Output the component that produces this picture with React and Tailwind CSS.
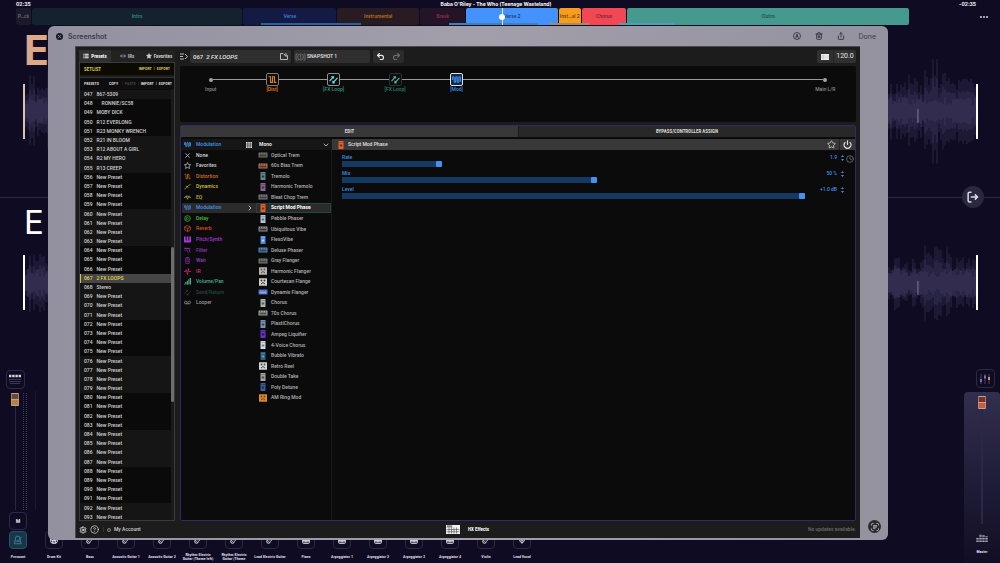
import React from "react";
import {
  List, Star, Undo2, Redo2, Power, Settings, CircleQuestionMark, Trash2, Share,
  X, ChevronRight, ChevronDown, Clock4, Guitar, Piano, Drum, Mic,
} from "lucide-react";

const segments = [
  { name: "P...ck", grow: 15, cls: "bg-[#1b1a2b] text-[#6d6c7e]" },
  { name: "Intro", grow: 212, cls: "bg-[#14212f] text-[#2f8f7c]" },
  { name: "Verse", grow: 94, cls: "bg-[#131b45] text-[#3a7fd8]" },
  { name: "Instrumental", grow: 82, cls: "bg-[#291b22] text-[#b86f20]" },
  { name: "Break", grow: 46, cls: "bg-[#241428] text-[#8c2f4c]" },
  { name: "Verse 2", grow: 92, cls: "bg-[#4492fb] text-[#1f4374]" },
  { name: "Inst...al 2", grow: 22, cls: "bg-[#f79c1b] text-[#754a0d]" },
  { name: "Chorus", grow: 45, cls: "bg-[#f24755] text-[#762730]" },
  { name: "Outro", grow: 284, cls: "bg-[#46998d] text-[#215149]" },
];

// [gap, length] pairs of the marker strip under the sections
const marks = [
  [245, 100, "bg-[#2a6298]"], [88, 88, "bg-[#4080b8]"], [12, 39, "bg-[#a08c68]"],
  [28, 0, "bg-transparent"], [2, 55, "bg-[#4c9fb8]"], [235, 0, "bg-transparent"],
];

const presetNames = {
  47: "867-5309", 48: "    RONNIE/SC58", 49: "MOBY DICK", 50: "R12 EVERLONG",
  51: "R23 MONKY WRENCH", 52: "R21 IN BLOOM", 53: "R12 ABOUT A GIRL", 54: "R2 MY HERO",
  55: "R13 CREEP", 67: "2 FX LOOPS", 68: "Stereo",
};
const presets = Array.from({ length: 47 }, (_, i) => {
  const n = 47 + i;
  return { n, id: String(n).padStart(3, "0"), name: presetNames[n] || "New Preset" };
});

const categories = [
  { name: "None", icon: "none", cls: "text-[#dcdcdc]" },
  { name: "Favorites", icon: "star", cls: "text-[#d0d0d0]" },
  { name: "Distortion", icon: "dist", cls: "text-[#d2721e]" },
  { name: "Dynamics", icon: "dyn", cls: "text-[#d0c224]" },
  { name: "EQ", icon: "eq", cls: "text-[#c0b626]" },
  { name: "Modulation", icon: "mod", cls: "text-[#3f92ea]", active: true },
  { name: "Delay", icon: "delay", cls: "text-[#39c42d]" },
  { name: "Reverb", icon: "reverb", cls: "text-[#d84c22]" },
  { name: "Pitch/Synth", icon: "pitch", cls: "text-[#a836d4]" },
  { name: "Filter", icon: "filter", cls: "text-[#9136c0]" },
  { name: "Wah", icon: "wah", cls: "text-[#9636c4]" },
  { name: "IR", icon: "ir", cls: "text-[#d02e7a]" },
  { name: "Volume/Pan", icon: "vol", cls: "text-[#46ab92]" },
  { name: "Send/Return", icon: "send", cls: "text-[#24493f]" },
  { name: "Looper", icon: "loop", cls: "text-[#989898]" },
];

const models = [
  ["Optical Trem", "wide", "#77776a", "#3a3a36"], ["60s Bias Trem", "wide", "#b0765a", "#5d3526"],
  ["Tremolo", "tall", "#5f8b8c", "#20383a"], ["Harmonic Tremolo", "tall", "#8a6590", "#432b49"],
  ["Bleat Chop Trem", "wide", "#777b80", "#3b3f44"], ["Script Mod Phase", "tall", "#e8602c", "#7d2d12"],
  ["Pebble Phaser", "tall", "#b9c2c9", "#3f6f9d"], ["Ubiquitous Vibe", "wide", "#8e8e8e", "#333333"],
  ["FlexoVibe", "tall", "#4a8ae0", "#c2d4ee"], ["Deluxe Phaser", "wide", "#5d83b3", "#2c4668"],
  ["Gray Flanger", "wide", "#77797c", "#424446"], ["Harmonic Flanger", "square", "#b6b6b6", "#6d4d4d"],
  ["Courtesan Flange", "square", "#d0cec8", "#36342f"], ["Dynamix Flanger", "wide", "#4668c4", "#8fa5df"],
  ["Chorus", "tall", "#b2b6a6", "#47557b"], ["70s Chorus", "wide", "#9da39b", "#4b504a"],
  ["PlastiChorus", "tall", "#7893ba", "#39465a"], ["Ampeg Liquifier", "tall", "#6a32c4", "#2b1463"],
  ["4-Voice Chorus", "tall", "#d4dade", "#6c8494"], ["Bubble Vibrato", "tall", "#2b5f80", "#5aa2c4"],
  ["Retro Reel", "square", "#d4d4d4", "#4b4b4b"], ["Double Take", "tall", "#a6a6a0", "#4c4c48"],
  ["Poly Detune", "tall", "#3d5d99", "#1c2b49"], ["AM Ring Mod", "square", "#dd8a26", "#71400c"],
];

const params = [
  { name: "Rate", value: "1.9", pct: 19 },
  { name: "Mix", value: "50 %", pct: 50 },
  { name: "Level", value: "+1.0 dB", pct: 92 },
];

const channels = [
  [["Drum Kit"], Drum], [["Bass"], Guitar], [["Acoustic Guitar 1"], Guitar], [["Acoustic Guitar 2"], Guitar],
  [["Rhythm Electric", "Guitar (Theme left)"], Guitar], [["Rhythm Electric", "Guitar (Theme"], Guitar],
  [["Lead Electric Guitar"], Guitar], [["Piano"], Piano], [["Arpeggiator 1"], Piano], [["Arpeggiator 2"], Piano],
  [["Arpeggiator 3"], Piano], [["Arpeggiator 4"], Piano], [["Violin"], Guitar], [["Lead Vocal"], Mic],
];

const glyphs = {
  none: <path d="M3 3l10 10M13 3L3 13" />,
  star: <path d="M8 1l2.2 4.7 5 .6-3.7 3.5 1 5L8 12.300l-4.500 2.500 1-5L.8 6.300l5-.6z" />,
  dist: <path d="M1 3h3.500v10H8V3h3.500v10H15" />,
  dyn: <path d="M1 14l5-4 4-4 5-3M4 7l6 3" />,
  eq: <path d="M0 8h3l2-3 3 7 3-7 2 3h3M3 5h10" />,
  mod: <path d="M1 9V4.500c0-2 2.800-2 2.800 0v7c0 2 2.800 2 2.800 0v-7c0-2 2.800-2 2.800 0v7c0 2 2.800 2 2.800 0v-7c0-2 2.800-2 2.800 0V12" />,
  delay: <><circle cx="8" cy="8" r="6.500" /><path d="M5 4v8M8 5l3 3-3 3" /></>,
  reverb: <><path d="M8 1l6.500 3.500v7L8 15l-6.500-3.500v-7z" /><path d="M1.500 4.500L8 8l6.500-3.500M8 8v7" /></>,
  pitch: <path fill="currentColor" stroke="none" d="M0 1h4v14H0zM6 1h4v14H6zM12 1h4v14h-4zM4 10h8v5H4z" />,
  filter: <path d="M1 3h9c3 0 2 10 5 10M1 7h5c3 0 2 6 4 6M1 3l14 1" />,
  wah: <><rect x="4" y="1" width="8" height="14" rx="1.500" /><path d="M6 4h4M6 7h4M6 10h4" /></>,
  ir: <path d="M0 8h4l1-4 3 11 2-14 1 7h5" />,
  vol: <path fill="currentColor" stroke="none" d="M0 15h2v-2H0zM3 15h2.500V9H3zM6.500 15H9V6H6.500zM10 15h2V3h-2zM13 15h3V0h-3z" />,
  send: <path d="M1 11l7-8M7 14l8-9M4 3h4v3M7 10v4h3" />,
  loop: <><circle cx="4" cy="8" r="3" /><circle cx="12" cy="8" r="3" /><path d="M4 11h8" /></>,
};

function Glyph({ name, className = "size-1.5", w = 1.6 }) {
  return (
    <svg viewBox="0 0 16 16" className={`${className} shrink-0`} fill="none" stroke="currentColor" strokeWidth={w} aria-hidden="true">
      {glyphs[name]}
    </svg>
  );
}

function Pedal({ shape, color, dark }) {
  return (
    <svg viewBox="0 0 20 16" className="h-2 w-2.5 shrink-0" aria-hidden="true">
      {shape === "wide" && (
        <g>
          <rect x="1" y="3" width="18" height="10" rx="1" fill={color} />
          <rect x="3" y="7" width="14" height="4" fill={dark} />
          <path d="M4 5h2M9 5h2M14 5h2" stroke={dark} strokeWidth="1.500" />
        </g>
      )}
      {shape === "tall" && (
        <g>
          <rect x="5" y="0" width="10" height="16" rx="1" fill={color} />
          <rect x="7.500" y="7" width="5" height="4" fill={dark} />
          <path d="M7 3h2M11 3h2" stroke={dark} strokeWidth="1.800" />
        </g>
      )}
      {shape === "square" && (
        <g>
          <rect x="2" y="0.500" width="16" height="15" rx="1" fill={color} />
          <circle cx="7" cy="5" r="1.800" fill={dark} />
          <circle cx="13" cy="5" r="1.800" fill={dark} />
          <path d="M6 12l4-3 4 3" stroke={dark} strokeWidth="2" fill="none" />
        </g>
      )}
    </svg>
  );
}

// Loudness along the track: [from x, amplitude]
const envelope = [[0, 36], [30, 26], [862, 34], [898, 52], [912, 44], [926, 34], [936, 36]];

function wavePath(seed, scale) {
  let s = seed;
  const rnd = () => ((s = (s * 16807) % 2147483647) / 2147483647);
  let soft = "";
  let mid = "";
  let core = "";
  for (let x = 1; x < 950; x += 2) {
    const level = envelope.filter(([from]) => x >= from).pop()[1] * scale;
    const a = level * (0.45 + rnd() * 0.6);
    const up = a * (0.9 + rnd() * 0.2);
    soft += `M${x} ${60 - up}V${60 + a}`;
    mid += `M${x} ${60 - a * 0.62}V${60 + a * 0.6}`;
    const c = 6 + rnd() * 8;
    core += `M${x} ${60 - c}V${60 + c}`;
  }
  return { soft, mid, core };
}
const waves = [wavePath(421, 1), wavePath(977, 0.78)];

function Lane({ letter, letterClass, laneClass, barClass, wave }) {
  return (
    <section className={`relative flex min-h-0 flex-1 items-center pr-[22px] pl-[23px] ${laneClass}`}>
      <span className={`absolute left-6 leading-none ${letterClass}`}>{letter}</span>
      <div className={`h-[55px] w-0.5 ${barClass}`} />
      <svg viewBox="0 0 950 120" preserveAspectRatio="none" className="h-[120px] min-w-0 flex-1" aria-hidden="true">
        <path d={wave.soft} stroke="#2c2848" strokeOpacity="0.5" strokeWidth="2" />
        <path d={wave.mid} stroke="#312d4e" strokeOpacity="0.6" strokeWidth="2" />
        <path d={wave.core} stroke="#3a3558" strokeOpacity="0.55" strokeWidth="2" />
        <path d="M892 58v14" stroke="#6d6988" strokeWidth="1.300" />
      </svg>
      <div className="h-[55px] w-0.5 bg-white" />
    </section>
  );
}

function Timeline() {
  return (
    <header className="flex h-[26px] shrink-0 flex-col">
      <div className="grid h-2 grid-cols-3 items-center px-4 pr-6 text-[5px] leading-none font-bold text-white">
        <span>02:35</span>
        <h1 className="text-center whitespace-nowrap">Baba O'Riley - The Who (Teenage Wasteland)</h1>
        <span className="text-right">-02:35</span>
      </div>
      <div className="flex h-[17px] items-center">
        <div className="relative ml-4 flex h-full min-w-0 flex-1 gap-px">
          {segments.map((s) => (
            <button key={s.name} style={{ flexGrow: s.grow }} className={`min-w-0 basis-0 overflow-hidden rounded-xs text-center font-['Lato',sans-serif] text-[5px] leading-none font-bold whitespace-nowrap ${s.cls}`}>
              {s.name}
            </button>
          ))}
          <div className="absolute inset-x-0 bottom-0 flex h-0.5">
            {marks.map(([gap, len, cls], i) => (
              <React.Fragment key={i}>
                <div className="basis-0" style={{ flexGrow: gap }} />
                <div className={`basis-0 ${cls}`} style={{ flexGrow: len }} />
              </React.Fragment>
            ))}
          </div>
          <div className="absolute inset-y-0 left-[54.4%] flex w-px items-center justify-center bg-white/80">
            <div className="size-1.5 shrink-0 rounded-full bg-white" />
          </div>
        </div>
        <button aria-label="More" className="flex w-[91px] items-center justify-end gap-px pr-3">
          <i className="size-0.5 rounded-full bg-[#d6d6de]" />
          <i className="size-0.5 rounded-full bg-[#d6d6de]" />
          <i className="size-0.5 rounded-full bg-[#d6d6de]" />
        </button>
      </div>
    </header>
  );
}

function Knob({ top, bottom }) {
  return (
    <svg viewBox="0 0 8 13" className="h-[13px] w-2" aria-hidden="true">
      <rect width="8" height="13" rx="1" fill="#b9a99c" />
      <rect x="0.600" y="1" width="6.800" height="5" fill={top} />
      <rect x="0.600" y="7" width="6.800" height="5" fill={bottom} />
    </svg>
  );
}

const narrow = "font-['Roboto_Condensed','Liberation_Sans_Narrow','Roboto',sans-serif]";

function Mixer() {
  return (
    <section className={`flex h-[195px] shrink-0 justify-between text-[4px] leading-none font-bold text-[#dcdce4] ${narrow}`}>
      <div className="flex">
        <div className="flex w-9 flex-col items-center pt-0.5">
          <button aria-label="Keyboard" className="mr-1.5 flex size-[19px] items-center justify-center rounded-sm border border-[#2c2947]">
            <svg viewBox="0 0 12 11" className="h-[11px] w-3" aria-hidden="true">
              <path d="M0 2h2.400M3.200 2h2.400M6.400 2h2.400M9.600 2H12" stroke="#d8d8e0" strokeWidth="2.600" />
              <path d="M0 5.500h12M0 7.500h12M1 9.500h10" stroke="#3a3658" />
            </svg>
          </button>
          <div className="mt-0.5 flex min-h-0 w-full flex-1 gap-1 border-r border-[#1c1936] pl-[11px]">
            <div className="flex flex-col items-center pt-0.5">
              <Knob top="#6d4a2a" bottom="#b8803f" />
              <div className="w-px flex-1 bg-[#2a2744]" />
            </div>
            <div className="mt-0.5 w-1 border-x border-dotted border-[#3b3858]" />
          </div>
          <button className="mt-0.5 flex size-[18px] items-center justify-center rounded-sm border border-[#2c2947] text-[6px]">M</button>
          <button aria-label="Metronome" className="mt-px flex size-[18px] items-center justify-center rounded-sm border border-[#24566a] bg-[#173648] text-[#3c8098]">
            <svg viewBox="0 0 16 16" className="size-2.5" fill="none" stroke="currentColor" strokeWidth="1.500" aria-hidden="true">
              <path d="M5 2h5l3 12H2zM4 10h8M7 10l7-7" />
            </svg>
          </button>
          <span className="mt-0.5 flex h-3 items-center">Precount</span>
        </div>
        {channels.map(([lines, Icon], i) => (
          <div key={i} className="flex w-9 flex-col items-center justify-end">
            <button aria-label={lines.join(" ")} className="flex size-[18px] items-center justify-center rounded-sm border border-[#2c2947]">
              <Icon className="size-2" strokeWidth={3} />
            </button>
            <span className="mt-0.5 flex h-3 flex-col items-center justify-center whitespace-nowrap">
              {lines.map((l) => <span key={l}>{l}</span>)}
            </span>
          </div>
        ))}
      </div>
      <div className="flex w-9 flex-col items-center">
        <button aria-label="Mixer" className="mt-px ml-1.5 flex size-[19px] items-center justify-center rounded-sm border border-[#2c2947]">
          <svg viewBox="0 0 12 12" className="size-3" aria-hidden="true">
            <path d="M2 1v10M6 1v10M10 1v10" stroke="#4a4668" />
            <path d="M2 6v3M6 2.500v3" stroke="#77739a" strokeWidth="2" />
            <path d="M10 4v3" stroke="#c8906a" strokeWidth="2" />
          </svg>
        </button>
        <div className="mt-1 flex w-full flex-1 flex-col items-center rounded-t-sm bg-linear-to-b from-[#322e4e] to-[#110e24] pt-1">
          <Knob top="#7a3024" bottom="#cf5a40" />
          <div className="w-0.5 flex-1 bg-[#2b2846]" />
          <svg viewBox="0 0 12 10" className="mt-2 h-2.5 w-3" aria-hidden="true">
            <path d="M1.500 10V6M4.500 10V2M7.500 10V3M10.500 10V4" stroke="#a9a8b8" strokeWidth="2.400" strokeDasharray="1.600 1" />
          </svg>
          <span className="mt-2 h-[13px]">Master</span>
        </div>
      </div>
    </section>
  );
}

function Sidebar() {
  return (
    <aside className="flex w-24 shrink-0 flex-col">
      <div role="tablist" className="grid h-3 grid-cols-3 font-bold">
        <button role="tab" aria-selected="true" className={`flex items-center justify-center gap-0.5 bg-[#303030] text-white ${narrow}`}><List className="size-1.5" strokeWidth={4} />Presets</button>
        <button role="tab" className={`flex items-center justify-center gap-0.5 bg-[#222] text-[#bbb] ${narrow}`}>
          <svg viewBox="0 0 16 10" className="h-1 w-1.5" stroke="currentColor" strokeWidth="2" aria-hidden="true"><path d="M0 5h4M5 1v8M11 1v8M12 5h4" /></svg>IRs
        </button>
        <button role="tab" className={`flex items-center justify-center gap-0.5 bg-[#222] text-[#ccc] ${narrow}`}><Star className="size-1.5 fill-current" />Favorites</button>
      </div>
      <div className="flex min-h-0 flex-1 flex-col border border-[#3a3a3a]">
        <div className={`flex h-3 shrink-0 items-center justify-between bg-[#0b0b02] px-1 font-bold text-[#d2c148] ${narrow}`}>
          <span>SETLIST</span>
          <span className="flex gap-0.5 text-[4px]"><button>IMPORT</button><span>|</span><button>EXPORT</button></span>
        </div>
        <div className={`mt-0.5 flex h-3 shrink-0 items-center justify-between border-t border-[#333] bg-[#0e0e0e] pr-0.5 pl-1 text-[4px] font-bold text-[#d6d6d6] ${narrow}`}>
          <span>PRESETS</span>
          <span className="flex gap-0.5">
            <button className="mr-0.5">COPY</button><span className="text-[#444]">|</span><button disabled className="text-[#444]">PASTE</button><span className="text-[#444]">|</span><button>IMPORT</button><span>|</span><button>EXPORT</button>
          </span>
        </div>
        <div className="flex min-h-0 flex-1 overflow-hidden bg-[#0b0b0b]">
          <ul className="mt-px -mb-0.5 flex min-w-0 flex-1 flex-col font-medium">
            {presets.map((p) => (
              <li key={p.n} className="min-h-0 flex-1">
                <button className={`flex h-full w-full items-center gap-1 border-l pl-[3px] whitespace-pre ${p.n === 67 ? "border-[#d8c53c] bg-[#464646] text-[#e6d54c]" : Math.floor(p.n / 4) % 2 ? "border-transparent bg-[#151515] text-[#d2d2d2]" : "border-transparent bg-[#0a0a0a] text-[#d2d2d2]"}`}>
                  <span>{p.id}</span><span>{p.name}</span>
                </button>
              </li>
            ))}
          </ul>
          <div className="flex w-[3px] flex-col bg-[#1a1a1a]">
            <div className="flex-[158]" />
            <div className="flex-[156] rounded-sm bg-[#6e6e6e]" />
            <div className="flex-[118]" />
          </div>
        </div>
      </div>
    </aside>
  );
}

function Toolbar() {
  return (
    <div className="flex h-[13px] shrink-0 items-stretch text-[6px] text-[#e6e6e6]">
      <button aria-label="Show signal flow" className="flex w-2.5 items-center">
        <svg viewBox="0 0 16 14" className="h-[7px] w-2" fill="none" stroke="currentColor" strokeWidth="1.600" aria-hidden="true"><path d="M0 2h8M0 7h6M0 12h8M10 2l5 5-5 5" /></svg>
      </button>
      <div className="flex w-[101px] items-center justify-between rounded-xs bg-[#2f2f2f] px-[3px] font-medium italic">
        <span className="whitespace-nowrap"><span className="not-italic">067</span>&nbsp; 2 FX LOOPS</span>
        <button aria-label="Save">
          <svg viewBox="0 0 16 14" className="h-[7px] w-2" fill="none" stroke="currentColor" strokeWidth="1.500" aria-hidden="true"><path d="M15 5v8H1V1h5l2 2h2" /><path d="M12 0v6M9.500 4L12 7l3-3" /></svg>
        </button>
      </div>
      <button className="ml-[3px] flex w-[76px] items-center gap-px rounded-xs bg-[#2f2f2f] px-px text-[5px] font-medium">
        <svg viewBox="0 0 22 16" className="h-2 w-[11px]" fill="none" stroke="#8c8c8c" strokeWidth="1.200" aria-hidden="true"><path d="M5 2H2v12h3M17 2h3v12h-3" /><circle cx="11" cy="8" r="6" /><path d="M9.500 6l2-1v7" /></svg>
        SNAPSHOT 1
      </button>
      <div className="ml-[3px] grid w-[31px] grid-cols-2 rounded-xs bg-[#2b2b2b]">
        <button aria-label="Undo" className="flex items-center justify-center"><Undo2 className="size-[9px]" strokeWidth={3} /></button>
        <button aria-label="Redo" className="flex items-center justify-center text-[#6a6a6a]"><Redo2 className="size-[9px]" strokeWidth={3} /></button>
      </div>
      <div className="ml-auto flex rounded-xs bg-[#303030]">
        <button aria-label="Tempo list" className="flex w-[17px] items-center justify-center border-r border-[#242424]">
          <svg viewBox="0 0 16 12" className="h-1.5 w-2" aria-hidden="true"><rect width="16" height="12" fill="#f4f4f4" /><path d="M0 4h16M0 8h16M4 0v12" stroke="#9a9a9a" strokeWidth="0.800" /></svg>
        </button>
        <button className="w-[22px] text-center text-[7px]">120.0</button>
      </div>
    </div>
  );
}

const nodes = [
  { label: "Input", kind: "dot", cls: "text-[#8a8a8a]" },
  { label: "[Dist]", kind: "dist", cls: "text-[#e07c1e]", frame: "border-[#7d7d7d] bg-[#0d0d0d]" },
  { label: "[FX Loop]", kind: "send", cls: "text-[#339480]", frame: "border-[#8f8f8f] bg-[#0d0d0d] text-[#6fe6e6]" },
  { label: "[FX Loop]", kind: "send", cls: "text-[#2d8270]", frame: "border-[#303030] bg-[#0d0d0d] text-[#4fb5ac]" },
  { label: "[Mod]", kind: "mod", cls: "text-[#3d8bea]", frame: "border-[#e4e4e4] bg-[#10294a]" },
  null, null, null, null, null,
  { label: "Main L/R", kind: "dot", cls: "text-[#8a8a8a]" },
];

function SignalFlow() {
  return (
    <div className="mt-[3px] grid h-14 shrink-0 grid-cols-11 rounded-xs bg-[#0b0b0b] pt-[7px] font-medium">
      {nodes.map((n, i) => (
        <div key={i} className={`flex min-w-0 flex-col items-center ${n ? n.cls : ""}`}>
          <div className="flex h-[13px] w-full items-center">
            <div className={`h-px flex-1 ${i === 0 ? "" : "bg-[#9a9a9a]"}`} />
            {n && n.kind === "dot" && <div className="size-1 rounded-full bg-[#a5a5a5]" />}
            {n && n.kind !== "dot" && (
              <button aria-label={n.label} className={`flex size-[13px] items-center justify-center rounded-xs border ${n.frame}`}>
                <Glyph name={n.kind} className="size-[9px]" w={2} />
              </button>
            )}
            <div className={`h-px flex-1 ${i === 10 ? "" : "bg-[#9a9a9a]"}`} />
          </div>
          {n && <span className="mt-px whitespace-nowrap">{n.label}</span>}
        </div>
      ))}
    </div>
  );
}

function Editor() {
  return (
    <div className="mt-[3px] flex min-h-0 flex-1 flex-col rounded-xs border border-[#33286c] bg-[#0b0b0b]">
      <div role="tablist" className={`grid h-[11px] shrink-0 grid-cols-2 font-bold text-[#d8d8d8] ${narrow}`}>
        <button role="tab" aria-selected="true" className="bg-[#383838]">EDIT</button>
        <button role="tab" className="border-l border-[#1a1a1a] bg-[#282826]">BYPASS/CONTROLLER ASSIGN</button>
      </div>
      <div className="mt-0.5 flex min-h-0 flex-1 font-medium">
        <div className="w-[75px] shrink-0 pl-px">
          <div className="flex h-[11px] items-center gap-1 bg-[#161616] pr-1 pl-0.5 text-[#3f92ea]">
            <Glyph name="mod" className="size-[7px]" w={2} />
            <span className="flex-1 pl-px">Modulation</span>
            <svg viewBox="0 0 11 11" className="size-1.5" fill="#dcdcdc" aria-hidden="true">
              <path d="M0 0h3v3H0zM4 0h3v3H4zM8 0h3v3H8zM0 4h3v3H0zM4 4h3v3H4zM8 4h3v3H8zM0 8h3v3H0zM4 8h3v3H4zM8 8h3v3H8z" />
            </svg>
          </div>
          <ul className="grid h-[158px] auto-rows-fr">
            {categories.map((c) => (
              <li key={c.name}>
                <button className={`flex h-full w-full items-center gap-1 pr-0.5 pl-0.5 ${c.cls} ${c.active ? "bg-[#2b2b2b]" : ""}`}>
                  <Glyph name={c.icon} className="size-[7px]" />
                  <span className="flex-1 pl-px text-left">{c.name}</span>
                  {c.active && <ChevronRight className="size-2 text-white" strokeWidth={2} />}
                </button>
              </li>
            ))}
          </ul>
        </div>
        <div className="w-[75px] shrink-0">
          <div className="flex h-[11px] items-center bg-[#161616] pr-px">
            <select aria-label="Model type" className="h-full flex-1 appearance-none bg-transparent pl-[3px] font-bold text-[#e2e2e2]">
              <option>Mono</option>
            </select>
            <ChevronDown className="size-2 text-white" strokeWidth={2} />
          </div>
          <ul className="grid h-[253px] auto-rows-fr">
            {models.map(([name, shape, color, dark]) => (
              <li key={name}>
                <button className={`flex h-full w-full items-center gap-[3px] border pl-px whitespace-nowrap ${name === "Script Mod Phase" ? "border-[#24453f] bg-[#2b2b2b] font-bold text-white" : "border-transparent text-[#b4b4b4]"}`}>
                  <Pedal shape={shape} color={color} dark={dark} />{name}
                </button>
              </li>
            ))}
          </ul>
        </div>
        <div className="min-w-0 flex-1 border-l border-[#1a1a1a]">
          <div className="flex h-[11px] items-center bg-[#383838] pl-1 text-[#e0e0e0]">
            <Pedal shape="tall" color="#e8602c" dark="#7d2d12" />
            <h2 className="flex-1 pl-0.5">Script Mod Phase</h2>
            <button aria-label="Add to favorites" className="flex w-4 justify-center"><Star className="size-[9px]" strokeWidth={2} /></button>
            <button aria-label="Bypass" className="flex h-full w-4 items-center justify-center border-l border-[#222]"><Power className="size-[9px]" strokeWidth={3} /></button>
          </div>
          <div className="flex pt-1 pl-2.5">
            <div className="flex min-w-0 flex-1 flex-col gap-[3px] text-[#3f8de4]">
              {params.map((p) => (
                <div key={p.name}>
                  <div className="flex h-[7px] items-center">
                    <label htmlFor={p.name} className="flex-1">{p.name}</label>
                    <output>{p.value}</output>
                    <svg viewBox="0 0 6 12" className="mr-px ml-1 h-1.5 w-[3px]" fill="currentColor" aria-hidden="true"><path d="M0 4l3-4 3 4zM0 8l3 4 3-4z" /></svg>
                  </div>
                  <input
                    id={p.name}
                    type="range"
                    min="0"
                    max="100"
                    defaultValue={p.pct}
                    style={{ backgroundImage: `linear-gradient(to right, #153a62 ${p.pct}%, transparent ${p.pct}%)` }}
                    className="block h-1.5 w-full appearance-none bg-transparent [&::-webkit-slider-thumb]:size-1.5 [&::-webkit-slider-thumb]:appearance-none [&::-webkit-slider-thumb]:rounded-[1px] [&::-webkit-slider-thumb]:bg-[#4292ee]"
                  />
                </div>
              ))}
            </div>
            <button aria-label="Tempo sync" className="flex h-2 w-2.5 shrink-0 justify-center text-[#858585]"><Clock4 className="mt-px size-2 shrink-0" strokeWidth={2} /></button>
          </div>
        </div>
      </div>
    </div>
  );
}

function ScreenshotWindow() {
  return (
    <div className="absolute top-[26px] right-28 bottom-[23px] left-12 flex flex-col rounded-md bg-linear-to-r from-[#9391a0] via-[#a29fab] to-[#95929f] pr-7 pb-0.5 pl-[27px] font-['Inter',sans-serif]">
      <div className="-mr-5 -ml-[19px] flex h-5 shrink-0 items-center text-[7px] leading-none text-[#3c3949]">
        <button aria-label="Close" className="flex size-[7px] items-center justify-center rounded-full bg-[#1c1a28] text-[#9391a0]"><X className="size-[5px]" strokeWidth={4} /></button>
        <h2 className="ml-[5px] flex-1 font-semibold">Screenshot</h2>
        <div className="flex items-center gap-3.5">
          <button aria-label="Markup">
            <svg viewBox="0 0 16 16" className="size-2" fill="none" stroke="currentColor" strokeWidth="1.800" aria-hidden="true"><circle cx="8" cy="8" r="7" /><path d="M5 13l3-9 3 9M6 9h4" /></svg>
          </button>
          <button aria-label="Delete"><Trash2 className="size-2" strokeWidth={3} /></button>
          <button aria-label="Share"><Share className="size-2" strokeWidth={3} /></button>
          <button className="mr-1">Done</button>
        </div>
      </div>
      <div className="flex min-h-0 flex-1 flex-col border-t border-l border-[#4a4a4e] bg-[#1c1c1c] pt-[3px] pr-1 pl-[3px] font-['Roboto',sans-serif] text-[5px] leading-none text-[#cfcfcf]">
        <div className="flex min-h-0 flex-1 gap-[5px]">
          <Sidebar />
          <main className="flex min-w-0 flex-1 flex-col">
            <Toolbar />
            <SignalFlow />
            <Editor />
          </main>
        </div>
        <footer className="grid h-[17px] shrink-0 grid-cols-3 items-center font-medium">
          <div className="flex items-center gap-[3px]">
            <button aria-label="Settings"><Settings className="size-2" strokeWidth={3} /></button>
            <button aria-label="Help"><CircleQuestionMark className="size-[9px]" strokeWidth={2} /></button>
            <button className="ml-px flex items-center gap-[3px] border-l border-[#333] pl-[3px]"><i className="size-1 rounded-full border border-[#888]" />My Account</button>
          </div>
          <div className={`flex items-center justify-center gap-2 font-bold text-white ${narrow}`}>
            <svg viewBox="0 0 28 18" className="h-[9px] w-3.5" aria-hidden="true">
              <rect width="28" height="18" fill="#f2f2f2" />
              <path d="M1 4h12M1 9h26M1 13.500h26M6 5v12M11 5v12M16 5v12M21 5v12" stroke="#444" strokeWidth="1.200" />
              <path d="M2 2h10" stroke="#222" strokeWidth="1.500" />
            </svg>
            HX Effects
          </div>
          <span className="text-right text-[#6c6c6c]">No updates available.</span>
        </footer>
      </div>
      <button aria-label="Scan text" className="absolute right-[7px] bottom-[7px] flex size-[13px] items-center justify-center rounded-full bg-[#2b2a2c] text-[#d2d0d6]">
        <svg viewBox="0 0 16 16" className="size-2" fill="none" stroke="currentColor" strokeWidth="1.600" aria-hidden="true"><path d="M1 5V3a2 2 0 012-2h2M11 1h2a2 2 0 012 2v2M15 11v2a2 2 0 01-2 2h-2M5 15H3a2 2 0 01-2-2v-2M4 5.500h8M4 8h8M4 10.500h5" /></svg>
      </button>
    </div>
  );
}

export default function App() {
  return (
    <div className="relative flex h-screen flex-col overflow-hidden bg-[#0e0b22] font-['Inter',sans-serif]">
      <Timeline />
      <div className="relative flex min-h-0 flex-1 flex-col">
        <Lane letter="E" letterClass="top-1 text-[41px] font-bold text-[#dca98a]" laneClass="border-b border-[#2b2845]" barClass="bg-[#d9c2b0]" wave={waves[0]} />
        <Lane letter="E" letterClass="top-2 text-[33px] text-white" laneClass="" barClass="bg-white" wave={waves[1]} />
        <button aria-label="Exit loop" className="absolute top-1/2 right-4 flex size-[22px] -translate-y-1/2 items-center justify-center rounded-full bg-[#2a2740] text-[#dcdbe2]">
          <svg viewBox="0 0 16 16" className="size-3" fill="none" stroke="currentColor" strokeWidth="2" aria-hidden="true"><path d="M6 1.500H3.500a2 2 0 00-2 2v9a2 2 0 002 2H6M5 8h9M10.500 4.500L14 8l-3.500 3.500" /></svg>
        </button>
      </div>
      <Mixer />
      <ScreenshotWindow />
    </div>
  );
}
